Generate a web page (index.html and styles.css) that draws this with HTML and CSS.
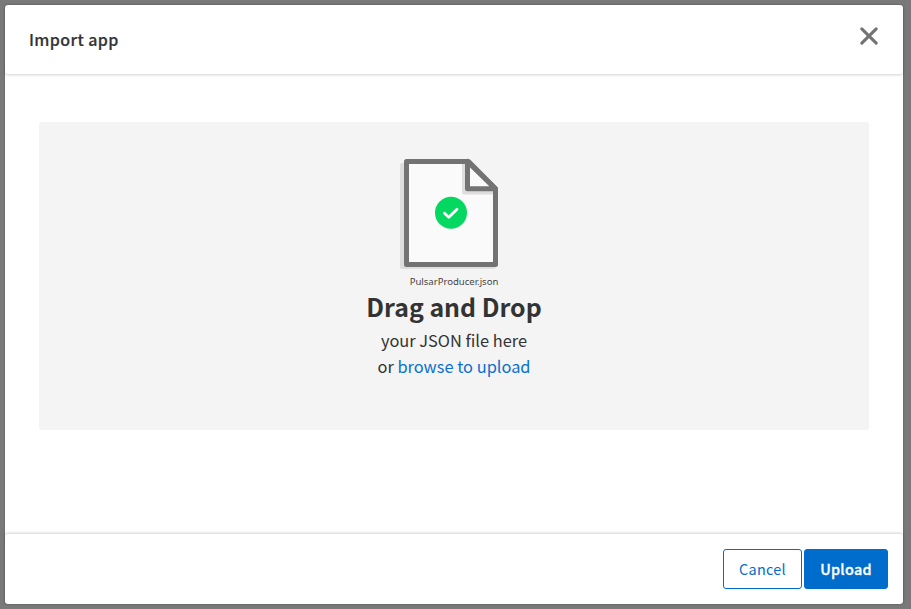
FILE: index.html
```html
<!DOCTYPE html>
<html lang="en">
<head>
<meta charset="utf-8">
<title>Import app</title>
<link rel="stylesheet" href="styles.css">
</head>
<body>
<div class="modal" role="dialog" aria-labelledby="title">
  <header class="header">
    <h1 class="title" id="title">Import app</h1>
    <button class="close" aria-label="Close">
      <svg width="18" height="18" viewBox="0 0 18 18"><path d="M2 2 16 16M16 2 2 16"/></svg>
    </button>
  </header>
  <main class="content">
    <section class="dropzone">
      <svg class="file" width="98" height="111" viewBox="0 0 98 111">
        <path class="shade" d="M2 5H62V35H96V108Q96 111 93 111H2Q0 111 0 109V7Q0 5 2 5Z"/>
        <path class="paper" d="M6.500 3.500H66.500L95.500 31V106.500H6.500Z"/>
        <path class="shade" d="M62 5H68V32H95V36.500H64Q62 36.500 62 34Z"/>
        <path class="fold" d="M67.500 3.500V30.800H95.500Z"/>
        <path class="outline" d="M6.500 3.500H68.500L95.500 30.800V106.500H6.500Z"/>
        <circle class="badge" cx="51" cy="54.800" r="16"/>
        <path class="check" d="M44.500 55.300 48.800 59.300 57 51.300"/>
      </svg>
      <p class="filename">PulsarProducer.json</p>
      <h2 class="heading">Drag and Drop</h2>
      <p class="hint">your JSON file here</p>
      <p class="hint hint-browse">or <a class="link">browse to upload</a></p>
    </section>
  </main>
  <footer class="footer">
    <button class="button cancel">Cancel</button>
    <button class="button upload">Upload</button>
  </footer>
</div>
</body>
</html>
```
FILE: styles.css
```css
* { box-sizing: border-box; }
body {
  margin: 0;
  height: 609px;
  padding: 5px 8px 5px 5px;
  overflow: hidden;
  background: #797979;
  color: #333;
  font-family: "Noto Sans CJK SC", "Noto Sans", sans-serif;
}
h1, h2, p { margin: 0; }
button { font-family: inherit; padding: 0; }
.modal {
  height: 599px;
  display: flex;
  flex-direction: column;
  background: #fff;
  border-radius: 3px;
  box-shadow: 0 0 2px rgba(0, 0, 0, .35);
}
.header {
  height: 69px;
  display: flex;
  justify-content: space-between;
  padding: 0 25px 0 24px;
  border-radius: 3px;
  box-shadow: 0 1px 3px rgba(0, 0, 0, .18);
}
.title { font-size: 16px; line-height: 68px; font-weight: 500; letter-spacing: .4px; -webkit-text-stroke: .2px currentColor; }
.close { height: 18px; margin-top: 22px; border: 0; background: none; }
.close svg { display: block; overflow: visible; fill: none; stroke: #737373; stroke-width: 3; stroke-linecap: round; }
.close path { transform: translate(9px, 9px) scale(1.03) translate(-9px, -9px); }
.content { flex: 1; padding: 48px 0 0 34px; }
.dropzone {
  width: 830px;
  height: 308px;
  display: flex;
  flex-direction: column;
  align-items: center;
  padding-top: 36px;
  background: #f4f4f4;
  border-radius: 3px;
}
.file { flex: none; margin-right: 10px; }
.shade { fill: #dfdddd; }
.paper { fill: #fafafa; }
.fold { fill: #fafafa; stroke: #737373; stroke-width: 5; stroke-linejoin: round; }
.outline { fill: none; stroke: #737373; stroke-width: 5; stroke-linejoin: round; }
.badge { fill: #04d860; }
.check { fill: none; stroke: #fff; stroke-width: 2.800; stroke-linecap: round; stroke-linejoin: round; }
.filename { margin: 5px 0 -1px; font: 9.550px/15px "Noto Sans", sans-serif; color: #444; white-space: nowrap; }
.heading { font-size: 24.900px; line-height: 36px; font-weight: 700; }
.hint { margin-top: 3px; font-size: 16.400px; line-height: 26px; }
.hint-browse { margin-top: 0; }
.link { color: #0b70ce; }
.footer {
  height: 70px;
  display: flex;
  justify-content: flex-end;
  gap: 2px;
  padding: 15px 15px 0 0;
  border-radius: 3px;
  box-shadow: 0 -1px 3px rgba(0, 0, 0, .18);
}
.button {
  height: 40px;
  padding-bottom: 1px;
  border: 1px solid #006dcc;
  border-radius: 3px;
  font-size: 14.400px;
  letter-spacing: .3px;
}
.cancel { width: 79px; background: #fff; color: #006dcc; }
.upload { width: 84px; background: #006dcc; color: #fff; font-weight: 500; -webkit-text-stroke: .3px currentColor; }
```
